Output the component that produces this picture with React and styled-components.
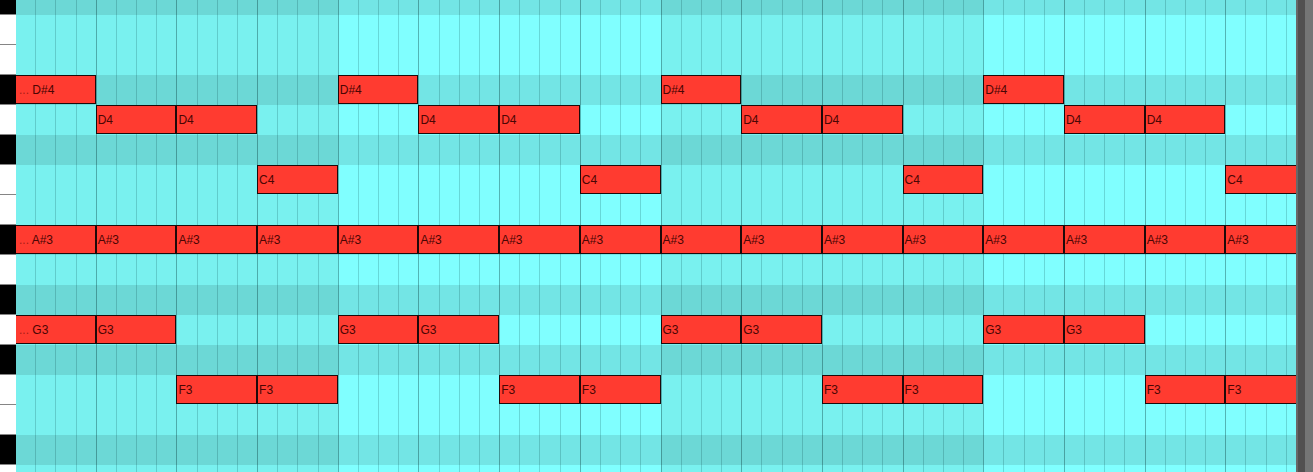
import React from "react";
import styled, { createGlobalStyle, css } from "styled-components";

const GlobalStyle = createGlobalStyle`
  * { box-sizing: border-box; }
  body {
    margin: 0;
    font-family: "Liberation Sans", Arial, sans-serif;
    background: #80ffff;
  }
`;

const Editor = styled.main`
  display: grid;
  grid-template-columns: 16px minmax(0, 1fr) 17px;
  height: 100vh;
  overflow: hidden;
`;

const Keyboard = styled.div`
  margin-top: -15px;
`;

const Key = styled.div`
  height: 30px;
  background: ${(p) => (p.$black ? "#000" : "#fff")};
  border-bottom: 1px solid #858585;
`;

const Viewport = styled.div`
  overflow: hidden;
`;

/* The timeline is scrolled a little and runs past both edges of the viewport. */
const Timeline = styled.div`
  display: grid;
  width: calc(100% + 11px);
  margin: -15px 0 0 -1px;
`;

const beatColumns = css`
  grid-area: 1 / 1;
  display: grid;
  min-width: 0;
`;

const Beats = styled.div`
  ${beatColumns}
  grid-template-columns: repeat(16, minmax(0, 1fr));
`;

const Beat = styled.div`
  display: grid;
  grid-template-columns: repeat(4, minmax(0, 1fr));
  background: ${(p) => (p.$shaded ? "#79f1ef" : "#80ffff")};
`;

const Step = styled.div`
  border-left: 1px solid
    ${(p) => (p.$none ? "transparent" : p.$major ? "rgba(0, 50, 50, 0.36)" : "rgba(0, 60, 60, 0.2)")};
`;

const Lanes = styled.div`
  ${beatColumns}
  grid-auto-rows: 30px;
`;

const Lane = styled.div`
  display: grid;
  grid-template-columns: repeat(16, minmax(0, 1fr));
  align-items: start;
  background: ${(p) => (p.$black ? "rgba(0, 0, 0, 0.1)" : "transparent")};
`;

const Note = styled.button`
  grid-column: ${(p) => p.$beat + 1};
  grid-row: 1;
  height: 29px;
  min-width: 0;
  margin: 0;
  padding: 2px 0 0 ${(p) => (p.$tail ? 4 : 1)}px;
  border: 1px solid #1c0a0a;
  border-left-width: ${(p) => (p.$tail ? 0 : 1)}px;
  border-radius: 0;
  background: #ff3b30;
  color: #4a0604;
  font: 12px/25px "Liberation Sans", Arial, sans-serif;
  text-align: left;
  white-space: nowrap;
`;

const Ellipsis = styled.span`
  color: #a81c16;
`;

const ScrollEdge = styled.div`
  display: grid;
  grid-template-columns: 2px 7px 1fr;
`;

const EdgeStrip = styled.div`
  background: ${(p) => p.$color};
`;

const every = (...phases) =>
  Array.from({ length: 16 }, (_, i) => i).filter((i) => phases.includes(i % 4));

const pitches = [
  "F#4", "F4", "E4", "D#4", "D4", "C#4", "C4", "B3", "A#3",
  "A3", "G#3", "G3", "F#3", "F3", "E3", "D#3", "D3",
];

const notes = {
  "D#4": every(0),
  D4: every(1, 2),
  C4: every(3),
  "A#3": every(0, 1, 2, 3),
  G3: every(0, 1),
  F3: every(2, 3),
};

export default function App() {
  return (
    <>
      <GlobalStyle />
      <Editor>
        <Keyboard>
          {pitches.map((p) => (
            <Key key={p} $black={p.includes("#")} />
          ))}
        </Keyboard>
        <Viewport>
          <Timeline>
            <Beats>
              {Array.from({ length: 16 }, (_, b) => (
                <Beat key={b} $shaded={Math.floor(b / 4) % 2 === 0}>
                  {[0, 1, 2, 3].map((s) => (
                    <Step key={s} $major={s === 0} $none={b === 0 && s === 0} />
                  ))}
                </Beat>
              ))}
            </Beats>
            <Lanes>
              {pitches.map((p) => (
                <Lane key={p} $black={p.includes("#")}>
                  {(notes[p] || []).map((b) => (
                    <Note key={b} type="button" $beat={b} $tail={b === 0}>
                      {b === 0 && <Ellipsis>... </Ellipsis>}
                      {p}
                    </Note>
                  ))}
                </Lane>
              ))}
            </Lanes>
          </Timeline>
        </Viewport>
        <ScrollEdge>
          <EdgeStrip $color="#686868" />
          <EdgeStrip $color="#525050" />
          <EdgeStrip $color="#757575" />
        </ScrollEdge>
      </Editor>
    </>
  );
}
